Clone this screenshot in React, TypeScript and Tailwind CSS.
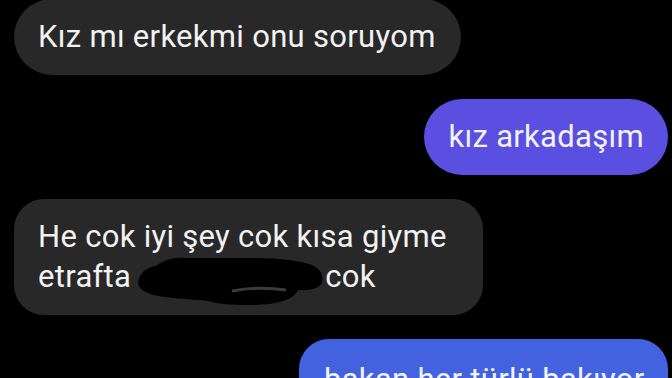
import React from "react";

export default function App() {
  return (
    <div
      className="w-[672px] h-[378px] overflow-hidden bg-black text-[#f2f2f2]"
      style={{ fontFamily: "Roboto, 'Noto Sans', sans-serif" }}
    >
      <div className="flex flex-col gap-6 pl-[14px] pr-[4px] -mt-[1px] text-[31px] leading-[40px] tracking-[0.3px]">
        <div className="self-start rounded-full bg-[#282828] pl-6 pr-[25px] py-[18px]">
          Kız mı erkekmi onu soruyom
        </div>
        <div className="self-end rounded-full bg-[#5a4fe0] px-6 py-[18px]">
          kız arkadaşım
        </div>
        <div className="relative self-start w-[469px] rounded-[30px] bg-[#282828] px-6 py-[18px]">
          He cok iyi şey cok kısa giyme
          <br />
          etrafta <span className="inline-block w-[178px]"></span> cok
          <svg
            className="absolute left-[122px] top-[55px]"
            width="192"
            height="54"
            viewBox="0 0 192 54"
          >
            <path
              d="M2,28 C4,18 10,14 20,12 C28,6 38,3 50,4 L110,4 C140,4 165,6 178,12 C188,18 190,30 180,34 C172,37 166,36 162,36 C158,46 140,51 114,51 C95,51 82,50 72,47 C55,45 30,44 17,41 C8,38 2,34 2,28 Z"
              fill="#000"
            />
            <path d="M96,37 Q122,32 150,36" stroke="#3b3b3b" strokeWidth="3" fill="none" />
          </svg>
        </div>
        <div className="self-end w-[369px] rounded-[30px] bg-[#4362df] pl-[25px] pr-4 pt-[21px] pb-[18px] whitespace-nowrap">
          bakan her türlü bakıyor
        </div>
      </div>
    </div>
  );
}
